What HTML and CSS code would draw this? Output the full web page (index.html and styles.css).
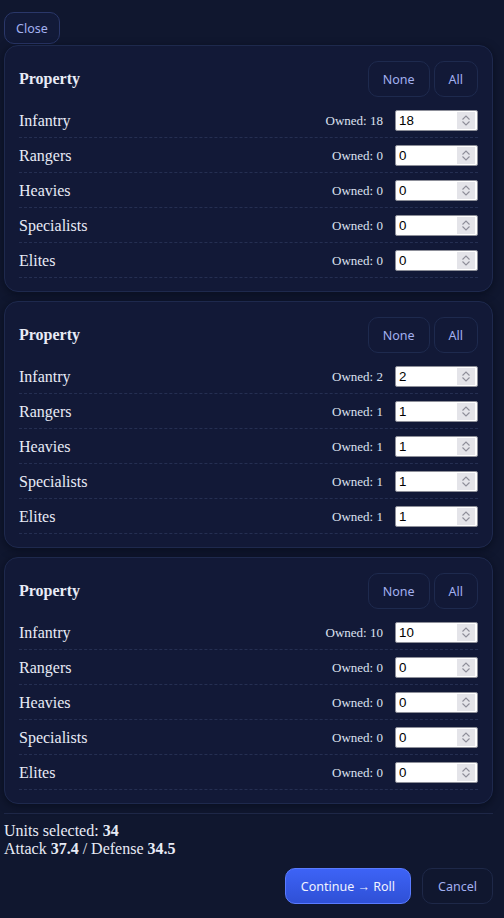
FILE: index.html
```html
<!DOCTYPE html>
<html lang="en">
<head>
<meta charset="utf-8">
<title>Select units</title>
<link rel="stylesheet" href="styles.css">
</head>
<body>
<div class="page">
  <div class="topbar"><button class="btn btn-close">Close</button></div>

  <section class="card">
    <div class="card-head">
      <h2 class="card-title">Property</h2>
      <div class="head-actions"><button class="btn btn-ghost">None</button><button class="btn btn-ghost">All</button></div>
    </div>
    <div class="row"><span class="unit">Infantry</span><div class="ctrl"><span class="owned">Owned: 18</span><span class="qty-wrap"><input class="qty" type="number" value="18"><span class="spin"><svg viewBox="0 0 18 17" width="18" height="17"><path d="M5.5 7.5 9 4 12.5 7.5M5.5 9.5 9 13 12.5 9.5"/></svg></span></span></div></div>
    <div class="row"><span class="unit">Rangers</span><div class="ctrl"><span class="owned">Owned: 0</span><span class="qty-wrap"><input class="qty" type="number" value="0"><span class="spin"><svg viewBox="0 0 18 17" width="18" height="17"><path d="M5.5 7.5 9 4 12.5 7.5M5.5 9.5 9 13 12.5 9.5"/></svg></span></span></div></div>
    <div class="row"><span class="unit">Heavies</span><div class="ctrl"><span class="owned">Owned: 0</span><span class="qty-wrap"><input class="qty" type="number" value="0"><span class="spin"><svg viewBox="0 0 18 17" width="18" height="17"><path d="M5.5 7.5 9 4 12.5 7.5M5.5 9.5 9 13 12.5 9.5"/></svg></span></span></div></div>
    <div class="row"><span class="unit">Specialists</span><div class="ctrl"><span class="owned">Owned: 0</span><span class="qty-wrap"><input class="qty" type="number" value="0"><span class="spin"><svg viewBox="0 0 18 17" width="18" height="17"><path d="M5.5 7.5 9 4 12.5 7.5M5.5 9.5 9 13 12.5 9.5"/></svg></span></span></div></div>
    <div class="row"><span class="unit">Elites</span><div class="ctrl"><span class="owned">Owned: 0</span><span class="qty-wrap"><input class="qty" type="number" value="0"><span class="spin"><svg viewBox="0 0 18 17" width="18" height="17"><path d="M5.5 7.5 9 4 12.5 7.5M5.5 9.5 9 13 12.5 9.5"/></svg></span></span></div></div>
  </section>

  <section class="card">
    <div class="card-head">
      <h2 class="card-title">Property</h2>
      <div class="head-actions"><button class="btn btn-ghost">None</button><button class="btn btn-ghost">All</button></div>
    </div>
    <div class="row"><span class="unit">Infantry</span><div class="ctrl"><span class="owned">Owned: 2</span><span class="qty-wrap"><input class="qty" type="number" value="2"><span class="spin"><svg viewBox="0 0 18 17" width="18" height="17"><path d="M5.5 7.5 9 4 12.5 7.5M5.5 9.5 9 13 12.5 9.5"/></svg></span></span></div></div>
    <div class="row"><span class="unit">Rangers</span><div class="ctrl"><span class="owned">Owned: 1</span><span class="qty-wrap"><input class="qty" type="number" value="1"><span class="spin"><svg viewBox="0 0 18 17" width="18" height="17"><path d="M5.5 7.5 9 4 12.5 7.5M5.5 9.5 9 13 12.5 9.5"/></svg></span></span></div></div>
    <div class="row"><span class="unit">Heavies</span><div class="ctrl"><span class="owned">Owned: 1</span><span class="qty-wrap"><input class="qty" type="number" value="1"><span class="spin"><svg viewBox="0 0 18 17" width="18" height="17"><path d="M5.5 7.5 9 4 12.5 7.5M5.5 9.5 9 13 12.5 9.5"/></svg></span></span></div></div>
    <div class="row"><span class="unit">Specialists</span><div class="ctrl"><span class="owned">Owned: 1</span><span class="qty-wrap"><input class="qty" type="number" value="1"><span class="spin"><svg viewBox="0 0 18 17" width="18" height="17"><path d="M5.5 7.5 9 4 12.5 7.5M5.5 9.5 9 13 12.5 9.5"/></svg></span></span></div></div>
    <div class="row"><span class="unit">Elites</span><div class="ctrl"><span class="owned">Owned: 1</span><span class="qty-wrap"><input class="qty" type="number" value="1"><span class="spin"><svg viewBox="0 0 18 17" width="18" height="17"><path d="M5.5 7.5 9 4 12.5 7.5M5.5 9.5 9 13 12.5 9.5"/></svg></span></span></div></div>
  </section>

  <section class="card">
    <div class="card-head">
      <h2 class="card-title">Property</h2>
      <div class="head-actions"><button class="btn btn-ghost">None</button><button class="btn btn-ghost">All</button></div>
    </div>
    <div class="row"><span class="unit">Infantry</span><div class="ctrl"><span class="owned">Owned: 10</span><span class="qty-wrap"><input class="qty" type="number" value="10"><span class="spin"><svg viewBox="0 0 18 17" width="18" height="17"><path d="M5.5 7.5 9 4 12.5 7.5M5.5 9.5 9 13 12.5 9.5"/></svg></span></span></div></div>
    <div class="row"><span class="unit">Rangers</span><div class="ctrl"><span class="owned">Owned: 0</span><span class="qty-wrap"><input class="qty" type="number" value="0"><span class="spin"><svg viewBox="0 0 18 17" width="18" height="17"><path d="M5.5 7.5 9 4 12.5 7.5M5.5 9.5 9 13 12.5 9.5"/></svg></span></span></div></div>
    <div class="row"><span class="unit">Heavies</span><div class="ctrl"><span class="owned">Owned: 0</span><span class="qty-wrap"><input class="qty" type="number" value="0"><span class="spin"><svg viewBox="0 0 18 17" width="18" height="17"><path d="M5.5 7.5 9 4 12.5 7.5M5.5 9.5 9 13 12.5 9.5"/></svg></span></span></div></div>
    <div class="row"><span class="unit">Specialists</span><div class="ctrl"><span class="owned">Owned: 0</span><span class="qty-wrap"><input class="qty" type="number" value="0"><span class="spin"><svg viewBox="0 0 18 17" width="18" height="17"><path d="M5.5 7.5 9 4 12.5 7.5M5.5 9.5 9 13 12.5 9.5"/></svg></span></span></div></div>
    <div class="row"><span class="unit">Elites</span><div class="ctrl"><span class="owned">Owned: 0</span><span class="qty-wrap"><input class="qty" type="number" value="0"><span class="spin"><svg viewBox="0 0 18 17" width="18" height="17"><path d="M5.5 7.5 9 4 12.5 7.5M5.5 9.5 9 13 12.5 9.5"/></svg></span></span></div></div>
  </section>

  <footer class="footer">
    <div class="summary">
      <div>Units selected: <b>34</b></div>
      <div>Attack <b>37.4</b> / Defense <b>34.5</b></div>
    </div>
    <div class="actions">
      <button class="btn btn-primary">Continue → Roll</button>
      <button class="btn btn-ghost btn-cancel">Cancel</button>
    </div>
  </footer>
</div>
</body>
</html>
```

FILE: styles.css
```css
html, body {
  margin: 0;
  padding: 0;
  background: #10172f;
}
body {
  font-family: "Liberation Serif", "Times New Roman", serif;
  color: #e8ebf6;
  font-size: 16px;
}
.page {
  padding: 12px 11px 14px 4px;
  display: flex;
  flex-direction: column;
}
.topbar {
  display: flex;
  margin-bottom: 1px;
}
.btn {
  font-family: "Noto Sans", "Open Sans", sans-serif;
  font-size: 12.5px;
  line-height: 17px;
  border-radius: 10px;
  cursor: pointer;
  color: #a3b0f0;
  background: #121a37;
  border: 1px solid #1f2a4f;
  padding: 8px 14px;
}
.btn-close {
  height: 32px;
  padding: 0 11px;
  border-color: #2a3769;
  background: #121a38;
}
.card {
  background: #121937;
  border: 1px solid #1e294d;
  border-radius: 14px;
  padding: 15px 14px 13px;
  margin-bottom: 9px;
  box-shadow: 0 2px 8px rgba(4, 7, 18, 0.55);
}
.card-head {
  display: flex;
  align-items: center;
  justify-content: space-between;
  margin-bottom: 6px;
}
.card-title {
  margin: 0;
  font-size: 16px;
  font-weight: bold;
  color: #e8ebf6;
}
.head-actions {
  display: flex;
  gap: 4px;
}
.head-actions .btn {
  height: 36px;
  padding: 0 14px;
  background: #121937;
  border-color: #1e2a4e;
}
.row {
  height: 34px;
  display: flex;
  align-items: center;
  justify-content: space-between;
  border-bottom: 1px dashed #252f52;
}
.unit {
  font-size: 16px;
  color: #e8ebf6;
  padding-top: 2px;
}
.ctrl {
  display: flex;
  align-items: center;
  gap: 12px;
  padding-top: 1px;
}
.owned {
  font-size: 13px;
  color: #dde1f0;
}
.qty-wrap {
  position: relative;
  display: block;
  width: 83px;
  height: 21px;
}
.qty {
  box-sizing: border-box;
  width: 83px;
  height: 21px;
  font-family: "Liberation Sans", Arial, sans-serif;
  font-size: 13.33px;
  color: #000;
  background: #fff;
  border: 1px solid #8d8f99;
  border-radius: 2px;
  padding: 1px 22px 1px 3px;
  -moz-appearance: textfield;
}
.qty::-webkit-inner-spin-button,
.qty::-webkit-outer-spin-button {
  -webkit-appearance: none;
  margin: 0;
}
.spin {
  position: absolute;
  top: 2px;
  right: 3px;
  width: 18px;
  height: 17px;
  background: #e4e4e9;
  display: block;
}
.spin svg {
  display: block;
  fill: none;
  stroke: #8e8e99;
  stroke-width: 1.1;
}
.footer {
  border-top: 1px solid #1e2747;
  padding-top: 8px;
  display: flex;
  flex-direction: column;
}
.summary {
  font-size: 16px;
  line-height: 18px;
  color: #e8ebf6;
}
.actions {
  display: flex;
  justify-content: flex-end;
  gap: 11px;
  margin-top: 10px;
}
.actions .btn {
  height: 36px;
  padding: 0 15px;
  font-size: 12.5px;
}
.btn-primary {
  color: #f1f3ff;
  background: linear-gradient(#3d63f6, #2f50d6);
  border-color: #5a7bff;
}
.btn-cancel {
  background: #10172f;
  border-color: #1e2848;
}
```
